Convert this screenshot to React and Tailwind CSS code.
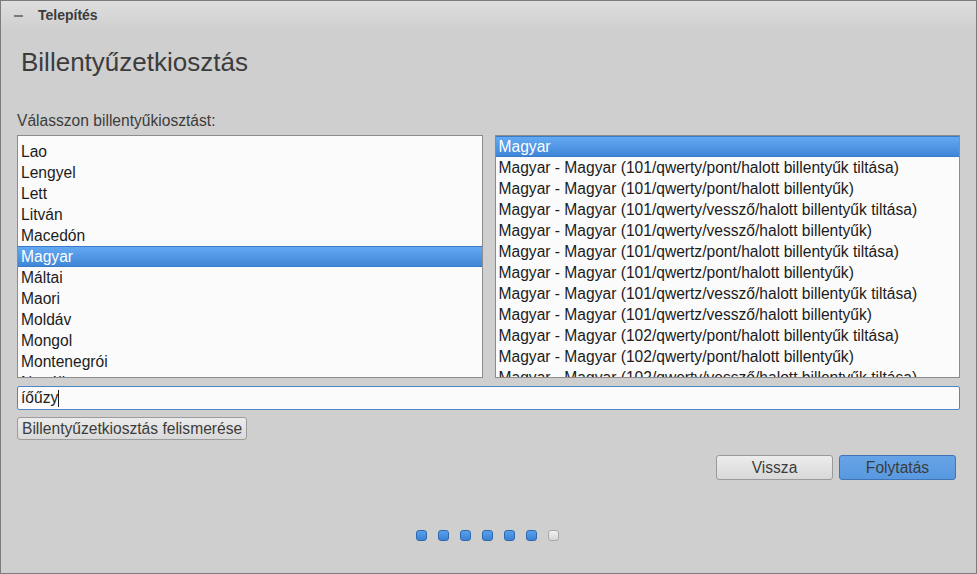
const layouts = [
  "Lao",
  "Lengyel",
  "Lett",
  "Litván",
  "Macedón",
  "Magyar",
  "Máltai",
  "Maori",
  "Moldáv",
  "Mongol",
  "Montenegrói",
  "Nepáli",
];

const variants = [
  "Magyar",
  "Magyar - Magyar (101/qwerty/pont/halott billentyűk tiltása)",
  "Magyar - Magyar (101/qwerty/pont/halott billentyűk)",
  "Magyar - Magyar (101/qwerty/vessző/halott billentyűk tiltása)",
  "Magyar - Magyar (101/qwerty/vessző/halott billentyűk)",
  "Magyar - Magyar (101/qwertz/pont/halott billentyűk tiltása)",
  "Magyar - Magyar (101/qwertz/pont/halott billentyűk)",
  "Magyar - Magyar (101/qwertz/vessző/halott billentyűk tiltása)",
  "Magyar - Magyar (101/qwertz/vessző/halott billentyűk)",
  "Magyar - Magyar (102/qwerty/pont/halott billentyűk tiltása)",
  "Magyar - Magyar (102/qwerty/pont/halott billentyűk)",
  "Magyar - Magyar (102/qwerty/vessző/halott billentyűk tiltása)",
];

const Row = ({ label, selected }) => (
  <div
    className={
      selected
        ? "h-[21px] flex items-center pl-[3px] pt-px text-white border-y border-[#3a7bc8] bg-gradient-to-b from-[#63a9f2] to-[#3f86d8]"
        : "h-[21px] flex items-center pl-[3px] pt-px text-[#1c1c1c]"
    }
  >
    <span className="whitespace-nowrap">{label}</span>
  </div>
);

const List = ({ items, selected, offset }) => (
  <div className="flex-1 h-[243px] border border-[#8c8c8c] bg-[#fbfbfb] overflow-hidden">
    <div className={offset}>
      {items.map((item, i) => (
        <Row key={item + i} label={item} selected={i === selected} />
      ))}
    </div>
  </div>
);

const Dot = ({ on }) => (
  <div
    className={
      on
        ? "w-[11px] h-[11px] rounded-[3px] border border-[#2f68ad] bg-gradient-to-b from-[#5aa0ec] to-[#3b82d6]"
        : "w-[11px] h-[11px] rounded-[3px] border border-[#a8a8a8] bg-gradient-to-b from-[#f0f0f0] to-[#d6d6d6]"
    }
  />
);

export default function App() {
  return (
    <div
      className="w-[977px] h-[574px] bg-[#cfcfcf] border border-[#7c7c7c] flex flex-col text-[15.6px]"
      style={{ fontFamily: '"Liberation Sans", Arial, sans-serif' }}
    >
      {/* title bar */}
      <div className="h-[29px] shrink-0 flex items-center bg-gradient-to-b from-[#dedede] to-[#cfcfcf]">
        <div className="ml-[13px] w-[9px] h-[2px] bg-[#7a7a7a]" />
        <span className="ml-[15px] text-[14px] font-bold text-[#3c3c3c]">Telepítés</span>
      </div>

      <div className="flex flex-col px-4">
        <h1 className="mt-[17px] ml-[4px] text-[26px] leading-[30px] text-[#3c3c3c]">
          Billentyűzetkiosztás
        </h1>

        <div className="mt-[34px] leading-[20px] text-[#3c3c3c]">Válasszon billentyűkiosztást:</div>

        <div className="mt-[4px] flex gap-[12px]">
          <List items={layouts} selected={5} offset="pt-[5px]" />
          <List items={variants} selected={0} offset="" />
        </div>

        <div className="mt-[8px] h-[24px] border border-[#4f86c6] rounded-[2px] bg-[#fbfbfb] flex items-center pl-[3px] text-[#1c1c1c]">
          <span>íőűzy</span>
          <span className="w-px h-[17px] bg-[#1c1c1c]" />
        </div>

        <div className="mt-[7px] flex">
          <button className="h-[23px] px-[4px] border border-[#9c9c9c] rounded-[3px] bg-gradient-to-b from-[#ececec] to-[#d9d9d9] text-[#3c3c3c] leading-none">
            Billentyűzetkiosztás felismerése
          </button>
        </div>

        <div className="mt-[15px] flex justify-end gap-[6px] pr-[4px]">
          <button className="w-[117px] h-[25px] border border-[#9a9a9a] rounded-[3px] bg-gradient-to-b from-[#ececec] to-[#d8d8d8] text-[#3c3c3c] leading-none">
            Vissza
          </button>
          <button className="w-[117px] h-[25px] border border-[#3f75b6] rounded-[3px] bg-gradient-to-b from-[#66a4e6] to-[#5898df] text-[#3c3c3c] leading-none">
            Folytatás
          </button>
        </div>

        <div className="mt-[50px] flex justify-center gap-[11px] pr-[2px]">
          {[1, 1, 1, 1, 1, 1, 0].map((on, i) => (
            <Dot key={i} on={on} />
          ))}
        </div>
      </div>
    </div>
  );
}
